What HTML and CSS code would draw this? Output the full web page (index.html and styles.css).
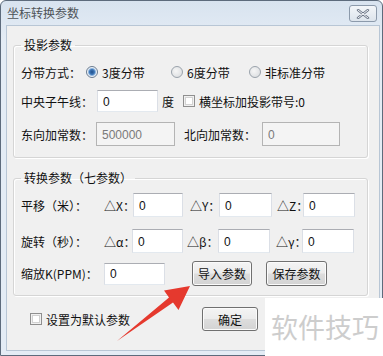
FILE: index.html
```html
<!DOCTYPE html>
<html lang="zh">
<head>
<meta charset="utf-8">
<link rel="stylesheet" href="styles.css">
</head>
<body>
<div class="window">
  <div class="titlebar">
    <span class="title">坐标转换参数</span>
    <span class="close">
      <svg width="14" height="10" viewBox="0 0 14 10"><path d="M2 1 L12 9 M12 1 L2 9" stroke="#6d7787" stroke-width="2.4" stroke-linecap="round" fill="none"/><path d="M2 1 L12 9 M12 1 L2 9" stroke="#f4f6f9" stroke-width="1" stroke-linecap="round" fill="none"/></svg>
    </span>
  </div>
  <div class="client">
    <fieldset class="group g1">
      <legend>投影参数</legend>
      <div class="row r1">
        <span class="lbl w65">分带方式：</span>
        <span class="opt o1"><span class="radio on"></span><span>3度分带</span></span>
        <span class="opt o2"><span class="radio"></span><span>6度分带</span></span>
        <span class="opt"><span class="radio"></span><span>非标准分带</span></span>
      </div>
      <div class="row r2">
        <span class="lbl w76">中央子午线：</span>
        <input class="tb w61" value="0">
        <span class="unit">度</span>
        <span class="opt"><span class="check"></span><span>横坐标加投影带号:0</span></span>
      </div>
      <div class="row r3">
        <span class="lbl w75">东向加常数：</span>
        <input class="tb dis w79" value="500000" disabled>
        <span class="lbl w78 ml9">北向加常数：</span>
        <input class="tb dis w78i" value="0" disabled>
      </div>
    </fieldset>
    <fieldset class="group g2">
      <legend>转换参数（七参数）</legend>
      <div class="row s1">
        <span class="lbl w83">平移（米）：</span>
        <span class="lbl d29">△X：</span><input class="tb i50" value="0">
        <span class="lbl d29 ml7">△Y：</span><input class="tb i53" value="0">
        <span class="lbl d26 ml5">△Z：</span><input class="tb i52" value="0">
      </div>
      <div class="row s2">
        <span class="lbl w83">旋转（秒）：</span>
        <span class="lbl d28">△α：</span><input class="tb i51" value="0">
        <span class="lbl d31 ml4">△β：</span><input class="tb i52" value="0">
        <span class="lbl d26 ml6">△γ：</span><input class="tb i52" value="0">
      </div>
      <div class="row s3">
        <span class="lbl w83">缩放K(PPM)：</span>
        <input class="tb w61" value="0">
        <button class="btn b1">导入参数</button>
        <button class="btn b2">保存参数</button>
      </div>
    </fieldset>
    <div class="row foot">
      <span class="opt"><span class="check"></span><span>设置为默认参数</span></span>
      <button class="btn ok">确定</button>
    </div>
  </div>
</div>
<svg class="arrow" width="383" height="356" viewBox="0 0 383 356"><polygon points="117,341 169,297.5 164,290.5 190,286 178.5,310 173,302.5" fill="#e5392e"/></svg>
<div class="mark">软件技巧</div>
</body>
</html>
```
FILE: styles.css
```css
html, body { margin: 0; padding: 0; }
body {
  width: 383px; height: 356px; overflow: hidden; position: relative;
  font-family: "Noto Sans CJK SC", "Noto Sans", sans-serif;
  font-size: 12px; color: #111;
  background: #fff;
}
.window {
  box-sizing: border-box; width: 383px; height: 356px;
  border: 1px solid #5d6b7c; border-radius: 6px 6px 0 0;
  background: linear-gradient(#d8e3ef, #e4ecf5 40px, #e4ecf5);
  display: flex; flex-direction: column;
}
.titlebar {
  height: 24px; display: flex; align-items: center;
  padding: 0 5px 0 6px; flex: none;
}
.title { color: #4e5358; font-size: 12px; line-height: 16px; }
.close {
  margin-left: auto; width: 28px; height: 17px; box-sizing: border-box;
  border: 1px solid #8c9aab; border-radius: 3px;
  background: linear-gradient(#f3f6f9, #dde4ec);
  display: flex; align-items: center; justify-content: center;
  margin-top: 1px;
}
.client {
  flex: 1; margin: 0 2px 4px 5px;
  border: 1px solid #b8c6d5; background: #f0f0f0;
}
.group {
  margin: 0; padding: 0 0 0 7px;
  border: 1px solid #d5d5d5; border-radius: 3px;
  box-shadow: inset 1px 1px 0 #fff, 1px 1px 0 #fff;
}
.group legend {
  padding: 0 3px; margin-left: 0; line-height: 16px; font-size: 12px; color: #111;
}
.g1 { margin: 11px 11px 0 6px; padding-top: 7px; padding-bottom: 11px; }
.g2 { margin: 12px 11px 0 6px; padding-top: 7px; padding-bottom: 9px; }
.row { display: flex; align-items: center; height: 24px; }
.r2 { margin-top: 5px; }
.r3 { margin-top: 9px; }
.s2 { margin-top: 12px; }
.s3 { margin-top: 8px; height: 25px; }
.foot { margin: 11px 0 0 23px; height: 24px; }
.lbl { white-space: nowrap; flex: none; }
.w65 { width: 65px; }
.w75 { width: 75px; }
.w76 { width: 76px; }
.w78 { width: 78px; }
.w83 { width: 83px; }
.d26 { width: 26px; } .d28 { width: 28px; } .d29 { width: 29px; } .d31 { width: 31px; }
.ml4 { margin-left: 4px; } .ml5 { margin-left: 5px; } .ml6 { margin-left: 6px; }
.ml7 { margin-left: 7px; } .ml9 { margin-left: 9px; }
.opt { display: flex; align-items: center; gap: 4px; white-space: nowrap; flex: none; }
.o1 { width: 85px; }
.o2 { width: 78px; }
.radio {
  width: 12px; height: 12px; box-sizing: border-box; border-radius: 50%;
  border: 1px solid #9aa2ab;
  background: radial-gradient(circle at 40% 40%, #f6f6f6, #d6d9dc);
}
.radio.on {
  background: radial-gradient(circle, #1f4f8c 0, #3f78b8 2.5px, #8db4de 3.5px, #eef3f8 4.5px, #d9dde2 100%);
  border-color: #6b7c91;
}
.check {
  width: 12px; height: 12px; box-sizing: border-box;
  border: 1px solid #8f8f8f;
  background: #fff;
  box-shadow: inset 0 0 0 1px #f0f0f0, inset 0 0 0 2px #d2d2d2;
}
.tb {
  box-sizing: border-box; height: 22px; margin: 0; padding: 1px 0 0 5px;
  border: 1px solid #abadb3; border-left-color: #dbdfe6; border-right-color: #dbdfe6; border-bottom-color: #e3e9ef;
  background: #fff; font-family: "Liberation Sans", sans-serif; font-size: 12px; color: #111;
  outline: none; flex: none;
}
.tb.dis { background: #f4f4f4; color: #7a7a7a; border-color: #b4b4b4; height: 24px; }
.s1 .tb, .s2 .tb { height: 24px; }
.w61 { width: 61px; } .w79 { width: 79px; } .w78i { width: 78px; }
.i50 { width: 50px; } .i51 { width: 51px; } .i52 { width: 52px; } .i53 { width: 53px; }
.unit { margin: 0 9px 0 4px; flex: none; }
.btn {
  box-sizing: border-box; height: 25px; margin: 0; padding: 0;
  border: 1px solid #707070; border-radius: 3px;
  background: linear-gradient(#f4f4f4 0%, #ececec 48%, #dddddd 52%, #d3d3d3 100%);
  box-shadow: inset 0 0 0 1px #fbfbfb;
  font-family: "Noto Sans CJK SC", sans-serif; font-size: 12px; color: #111;
  flex: none;
}
.b1 { width: 60px; margin-left: 27px; }
.b2 { width: 61px; margin-left: 14px; }
.ok { width: 56px; height: 24px; margin-left: 72px; }
.arrow { position: absolute; left: 0; top: 0; pointer-events: none; }
.mark {
  position: absolute; left: 265px; top: 298px; width: 118px; height: 58px;
  background: #fff; color: #cdcdcd; font-size: 27px; line-height: 58px;
  padding-left: 6px; box-sizing: border-box; white-space: nowrap; letter-spacing: 0;
}
```
